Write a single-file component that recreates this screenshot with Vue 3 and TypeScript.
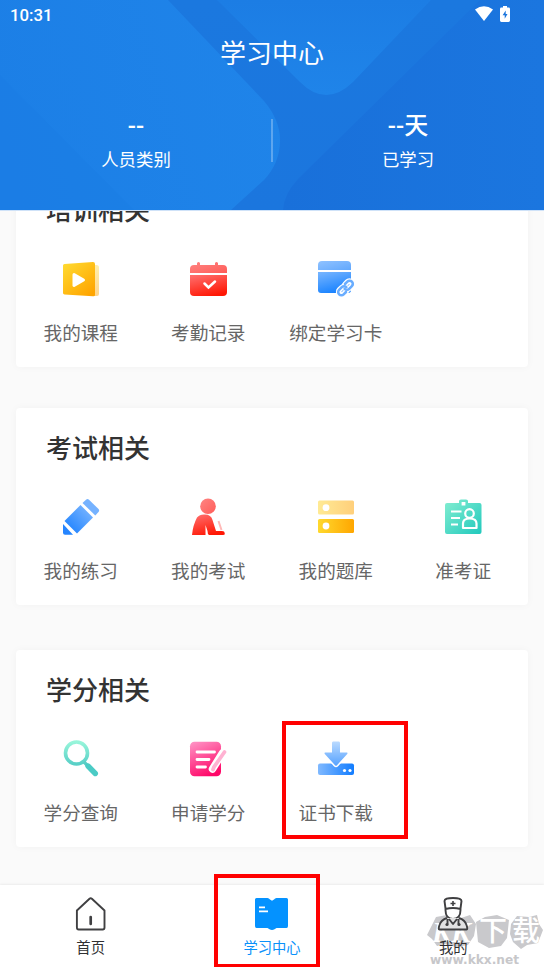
<script setup lang="ts">
interface Entry {
  icon: string
  label: string
  marked?: boolean
}
interface Section {
  title: string
  entries: Entry[]
}

const stats = [
  { value: '--', label: '人员类别' },
  { value: '--天', label: '已学习' },
]

const sections: Section[] = [
  {
    title: '培训相关',
    entries: [
      { icon: 'course', label: '我的课程' },
      { icon: 'calendar', label: '考勤记录' },
      { icon: 'card', label: '绑定学习卡' },
    ],
  },
  {
    title: '考试相关',
    entries: [
      { icon: 'pencil', label: '我的练习' },
      { icon: 'exam', label: '我的考试' },
      { icon: 'bank', label: '我的题库' },
      { icon: 'badge', label: '准考证' },
    ],
  },
  {
    title: '学分相关',
    entries: [
      { icon: 'search', label: '学分查询' },
      { icon: 'apply', label: '申请学分' },
      { icon: 'download', label: '证书下载', marked: true },
    ],
  },
]

const tabs = [
  { key: 'home', label: '首页' },
  { key: 'study', label: '学习中心' },
  { key: 'mine', label: '我的' },
]
</script>

<template>
  <div class="screen">
    <svg class="defs" width="0" height="0" aria-hidden="true">
      <defs>
        <linearGradient id="gYellow" x1="0" y1="0" x2=".8" y2="1"><stop offset="0" stop-color="#ffdc32" /><stop offset="1" stop-color="#ffa500" /></linearGradient>
        <linearGradient id="gYellowH"><stop offset="0" stop-color="#ffd92e" /><stop offset="1" stop-color="#ffa600" /></linearGradient>
        <linearGradient id="gPaleH"><stop offset="0" stop-color="#ffea94" /><stop offset="1" stop-color="#ffcf7b" /></linearGradient>
        <linearGradient id="gPaleV" x1="0" y1="0" x2="0" y2="1"><stop offset="0" stop-color="#ffefac" /><stop offset="1" stop-color="#ffd58c" /></linearGradient>
        <linearGradient id="gRed" x1=".2" y1="0" x2=".6" y2="1"><stop offset="0" stop-color="#ff6b69" /><stop offset="1" stop-color="#ff1704" /></linearGradient>
        <linearGradient id="gRedTop" x1="0" y1="0" x2="1" y2="1"><stop offset="0" stop-color="#ff8583" /><stop offset="1" stop-color="#ff5c58" /></linearGradient>
        <linearGradient id="gBlue" x1=".2" y1="0" x2=".6" y2="1"><stop offset="0" stop-color="#73b3ff" /><stop offset="1" stop-color="#1480ff" /></linearGradient>
        <linearGradient id="gBlueTop" x1="0" y1="0" x2="1" y2="1"><stop offset="0" stop-color="#90c2ff" /><stop offset="1" stop-color="#62a8fd" /></linearGradient>
        <linearGradient id="gPencil" x1="1" y1="0" x2="0" y2="1"><stop offset="0" stop-color="#86bcff" /><stop offset="1" stop-color="#137cff" /></linearGradient>
        <linearGradient id="gTray"><stop offset="0" stop-color="#80b9ff" /><stop offset="1" stop-color="#117cff" /></linearGradient>
        <linearGradient id="gArrow" x1="0" y1="0" x2="0" y2="1"><stop offset="0" stop-color="#badaff" /><stop offset="1" stop-color="#56a2ff" /></linearGradient>
        <linearGradient id="gTeal" x1="0" y1="0" x2="1" y2="1"><stop offset="0" stop-color="#84eed1" /><stop offset="1" stop-color="#21c9bd" /></linearGradient>
        <linearGradient id="gLens" x1="0" y1="0" x2="0" y2="1"><stop offset="0" stop-color="#97f5da" /><stop offset="1" stop-color="#59d0c7" /></linearGradient>
        <linearGradient id="gPink" x1=".2" y1="0" x2=".6" y2="1"><stop offset="0" stop-color="#ff8dc1" /><stop offset="1" stop-color="#ff0768" /></linearGradient>
      </defs>
    </svg>

    <header class="header">
      <svg class="header-art" viewBox="0 0 544 210" aria-hidden="true">
        <defs>
          <linearGradient id="hMid" x1="0" y1="0" x2="0" y2="1"><stop offset="0" stop-color="#1b78df" /><stop offset="1" stop-color="#1b76de" /></linearGradient>
          <linearGradient id="hLeft" x1="0" y1=".6" x2="1" y2=".4"><stop offset="0" stop-color="#1c7fe6" /><stop offset="1" stop-color="#1f84e9" /></linearGradient>
          <linearGradient id="hTop" x1="0" y1="0" x2="0" y2="1"><stop offset="0" stop-color="#1c7de4" /><stop offset="1" stop-color="#1f84e9" /></linearGradient>
          <linearGradient id="hRight"><stop offset="0" stop-color="#1970da" /><stop offset="1" stop-color="#1b76df" /></linearGradient>
        </defs>
        <rect width="544" height="210" fill="url(#hMid)" />
        <path d="M0 0H168L264 101Q280 120 280 140Q280 163 264 180L231 210H0Z" fill="url(#hLeft)" />
        <path d="M0 75L134 210H0Z" fill="#1a7be3" opacity=".35" />
        <path d="M217 0H431L353 82Q326 108 300 82Z" fill="url(#hTop)" />
        <path d="M480 0H544V210H283Q284 194 298 179Z" fill="url(#hRight)" />
      </svg>
      <div class="status">
        <span class="clock">10:31</span>
        <span class="status-icons">
          <svg width="18" height="15" viewBox="0 0 18 15"><path d="M0 3.6Q9-3.3 18 3.6L9 15Z" fill="#fff" /></svg>
          <svg width="10" height="16" viewBox="0 0 10 16"><path d="M3 0H7V1.6H8.6Q10 1.6 10 3V14.6Q10 16 8.6 16H1.4Q0 16 0 14.6V3Q0 1.6 1.4 1.6H3Z" fill="#fff" /><path d="M5.7 4.5L2.6 9.2H4.7V12.7L7.5 8H5.7Z" fill="#1a75dd" /></svg>
        </span>
      </div>
      <h1>学习中心</h1>
      <div class="stats">
        <div v-for="s in stats" :key="s.label" class="stat">
          <strong>{{ s.value }}</strong>
          <span>{{ s.label }}</span>
        </div>
      </div>
    </header>

    <main class="scroll">
      <section v-for="section in sections" :key="section.title" class="panel">
        <h2>{{ section.title }}</h2>
        <div class="grid">
          <div v-for="e in section.entries" :key="e.icon" class="entry">
            <svg class="icon" viewBox="0 0 40 40" aria-hidden="true">
              <template v-if="e.icon === 'course'">
                <path d="M30 5H36Q38 5.5 38 7V34Q38 36 36 36H30Z" fill="url(#gPaleV)" />
                <path d="M3.5 4L32 2Q34 2 34 4V35Q34 36.500 32 36.300L3.500 34.500Q2 34 2 33V5.500Q2 4.200 3.500 4Z" fill="url(#gYellow)" />
                <path d="M13 14.500L22.500 20L13 25.500Z" fill="#fff" stroke="#fff" stroke-width="3" stroke-linejoin="round" />
              </template>
              <template v-else-if="e.icon === 'calendar'">
                <path d="M2 13V9Q2 5 6 5H9V3Q10.500 1 12 3V5H27V3Q28.500 1 30 3V5H35Q39 5 39 9V13Z" fill="url(#gRedTop)" />
                <path d="M2 15H39V32Q39 36 35 36H6Q2 36 2 32Z" fill="url(#gRed)" />
                <path d="M16.500 23.500L20.500 27.500L27 21.500" fill="none" stroke="#fff" stroke-width="2.500" stroke-linecap="round" />
              </template>
              <template v-else-if="e.icon === 'card'">
                <path d="M2 10V5Q2 1 6 1H31Q35 1 35 5V10Z" fill="url(#gBlueTop)" />
                <path d="M2 12H35V30Q35 33 32 33H5Q2 33 2 30Z" fill="url(#gBlue)" />
                <g fill="none" stroke-linecap="round">
                  <g transform="rotate(-45 29.500 28)" stroke="#fff" stroke-width="5.500"><rect x="21" y="25" width="9" height="6" rx="3" /><rect x="29" y="25" width="9" height="6" rx="3" /></g>
                  <g transform="rotate(-45 29.500 28)" stroke="#69adff" stroke-width="2.600"><path d="M27 31.200H23.700A3.200 3.200 0 0 1 23.700 24.800H27.500A3.200 3.200 0 0 1 30.700 28" /><path d="M32 24.800H35.300A3.200 3.200 0 0 1 35.300 31.200H31.500A3.200 3.200 0 0 1 28.300 28" /></g>
                </g>
              </template>
              <template v-else-if="e.icon === 'pencil'">
                <path d="M21.500 6L25 2.700Q26.500 1.400 28 2.700L37.500 12Q38.800 13.500 37.500 15L34.300 18.500Z" fill="#75b2ff" />
                <path d="M19.500 8L32 20.500L16 36.500L3.500 24Z" fill="url(#gPencil)" />
                <path d="M2 27L12 37.800H4Q2 37.800 2 35.800Z" fill="#2585ff" />
              </template>
              <template v-else-if="e.icon === 'exam'">
                <circle cx="20" cy="9.200" r="7.800" fill="url(#gRedTop)" />
                <path d="M4 38Q5 28 9 20.500Q12 17 17 17.500Q23 17.500 24.500 23L28 34H34L36 34.500Q38 38 35 38H21Q19.500 37 19.500 34L17.500 28V38Z" fill="url(#gRed)" />
                <path d="M30.500 24L33.500 33" stroke="#ffb9b7" stroke-width="2" />
              </template>
              <template v-else-if="e.icon === 'bank'">
                <rect x="2" y="3.500" width="36" height="14" rx="1.500" fill="url(#gPaleH)" />
                <rect x="2" y="22" width="36" height="14" rx="1.500" fill="url(#gYellowH)" />
                <circle cx="10" cy="10.700" r="3.400" fill="#fff" /><circle cx="10" cy="29" r="3.400" fill="#fff" />
              </template>
              <template v-else-if="e.icon === 'badge'">
                <path fill-rule="evenodd" d="M16 6V4Q16 2.500 18 2.500H23Q25 2.500 25 4V6H36.500Q38.500 6 38.500 8V35Q38.500 37 36.500 37H4Q2 37 2 35V8Q2 6 4 6ZM18.600 5H22.400V8.500H18.600Z" fill="url(#gTeal)" />
                <g fill="none" stroke="#fff" stroke-width="2.200"><path d="M8 14.500H18.500M8 21H17M8 27.500H15" /><circle cx="26.500" cy="16.500" r="4.300" /><path d="M20 31V26.500Q20 21.500 26.500 21.500Q33.500 21.500 33.500 26.500V31Z" stroke-linejoin="round" /></g>
              </template>
              <template v-else-if="e.icon === 'search'">
                <circle cx="15.500" cy="14" r="11" fill="none" stroke="url(#gLens)" stroke-width="3.600" />
                <path d="M23 23L27 27" stroke="#59cec6" stroke-width="3.300" /><path d="M27 27L34.300 34.500" stroke="#4bcbc5" stroke-width="5.400" stroke-linecap="round" />
              </template>
              <template v-else-if="e.icon === 'apply'">
                <rect x="2" y="2.800" width="31" height="34.500" rx="4.500" fill="url(#gPink)" />
                <path d="M9 13H26.500M9 20.500H21M9 28H17.500" stroke="#fff" stroke-width="2.800" stroke-linecap="round" />
                <path d="M34.500 14L24.500 30" stroke="#fff" stroke-width="7.500" stroke-linecap="round" /><path d="M36.500 13L26 28L25 30.500" fill="none" stroke="#ffb2d2" stroke-width="3.700" stroke-linecap="round" />
              </template>
              <template v-else>
                <path d="M4 24.500H36Q38 24.500 38 26.500V34Q38 36 36 36H4Q2 36 2 34V26.500Q2 24.500 4 24.500Z" fill="url(#gTray)" />
                <path d="M17 2.500H23Q24 2.500 24 4V13.500H31Q32 14 31 15.200L21 26.200Q20 27.300 19 26.200L9 15.200Q8 14 9 13.500H16V4Q16 2.500 17 2.500Z" fill="url(#gArrow)" stroke="#fff" stroke-width="3" paint-order="stroke" />
                <circle cx="28.500" cy="31.500" r="1.600" fill="#fff" /><circle cx="34" cy="31.500" r="1.600" fill="#fff" />
              </template>
            </svg>
            <span>{{ e.label }}</span>
            <i v-if="e.marked" class="marker marker-entry"></i>
          </div>
        </div>
      </section>
    </main>

    <nav class="tabs">
      <div class="watermark" aria-hidden="true">
        <svg viewBox="0 0 116 34"><path d="M4 12L9 2L20 0L34 3L43 0L49 9L47 21L41 30L29 32L18 29L10 31L5 24L0 20ZM49 7L58 2L70 0L82 5L80 23L74 31L62 33L51 27ZM84 9L90 1L102 2L110 0L112 9L116 15L111 28L100 30L94 34L86 27L83 19Z" fill="#c9c9cc" /></svg>
        <span class="wm-kk">KK</span><span class="wm-cn">下载</span>
        <span class="wm-url">www.kkx.net</span>
      </div>
      <div v-for="t in tabs" :key="t.key" class="tab" :class="{ active: t.key === 'study' }">
        <svg class="tab-icon" viewBox="0 0 36 36" aria-hidden="true">
          <template v-if="t.key === 'home'">
            <path d="M3.900 14.500L16.500 2.800Q17.700 1.800 18.900 2.800L31.500 14.500V31.500Q31.500 33.500 29.700 33.500H5.700Q3.900 33.500 3.900 31.500Z" fill="none" stroke="#404042" stroke-width="1.900" stroke-linejoin="round" /><path d="M17.700 21V28" stroke="#404042" stroke-width="2.700" stroke-linecap="round" />
          </template>
          <template v-else-if="t.key === 'study'">
            <path d="M2.500 2H13.500Q15 2 16 3.500L18 4.700L20 3.500Q21 2 22.500 2H32.500Q34 2 34 3.500V30Q34 32 32.500 32H22.500L20.500 33.300Q18 34.500 15.500 33.300L13.500 32H2.500Q1 32 1 30V3.500Q1 2 2.500 2Z" fill="#0492ff" /><path d="M5 11.300H11M5 15.300H14" stroke="#fff" stroke-width="1.700" />
          </template>
          <template v-else>
            <g fill="none" stroke="#404042" stroke-width="1.900" stroke-linejoin="round"><path d="M10.500 12.500L9.500 5Q9.500 2 18 2Q26.500 2 26.500 5L25.500 12.500V14Q25.500 23 18 23Q10.500 23 10.500 14ZM10.500 13Q18 11 25.500 13" fill="#fff" /><path d="M12 22Q6 24 4.500 29Q3 33.500 4.500 33.500H31.500Q33 33.500 31.500 29Q30 24 24 22" fill="#e1e1e2" /><path d="M12.500 23V28M23.500 23V28M14 23L18 28L22 23" /></g><path d="M18 5V10M15.500 7.500H20.500" stroke="#404042" stroke-width="1.600" /><circle cx="12" cy="28.500" r="1.600" fill="#404042" /><circle cx="24" cy="28.500" r="1.600" fill="#404042" />
          </template>
        </svg>
        <span>{{ t.label }}</span>
        <i v-if="t.key === 'study'" class="marker marker-tab"></i>
      </div>
    </nav>
  </div>
</template>

<style>
body { margin: 0; }
</style>

<style scoped>
.screen {
  width: 544px;
  height: 967px;
  display: flex;
  flex-direction: column;
  overflow: hidden;
  background: #fafafa;
  font-family: Roboto, "Noto Sans CJK SC", sans-serif;
}
.defs { position: absolute; }
.header {
  position: relative;
  flex: none;
  height: 210px;
  color: #fff;
  box-shadow: 0 1px 0 #cfe2f8;
  z-index: 1;
}
.header-art { position: absolute; inset: 0; width: 544px; height: 210px; }
.status {
  position: relative;
  display: flex;
  justify-content: space-between;
  height: 30px;
  padding: 0 34px 0 10px;
  box-sizing: border-box;
}
.clock { font-size: 16.8px; line-height: 31px; font-weight: 500; }
.status-icons { display: flex; gap: 7px; padding-top: 6px; }
h1 {
  position: relative;
  margin: 0;
  height: 46px;
  line-height: 48px;
  font-size: 26px;
  font-weight: 400;
  text-align: center;
}
.stats { position: relative; display: flex; padding-top: 33px; }
.stats::after {
  content: "";
  position: absolute;
  left: 271px;
  top: 43px;
  width: 2px;
  height: 43px;
  background: rgba(255, 255, 255, .28);
}
.stat { flex: 1; display: flex; flex-direction: column; align-items: center; }
.stat strong { font-size: 24px; line-height: 34px; height: 34px; font-weight: 500; }
.stat span { font-size: 17.4px; line-height: 34px; }
.scroll {
  flex: 1;
  min-height: 0;
  overflow: hidden;
  display: flex;
  flex-direction: column;
  padding: 0 16px;
}
.panel {
  flex: none;
  height: 197px;
  margin-bottom: 45px;
  background: #fff;
  border-radius: 4px;
  box-shadow: 0 0 8px rgba(0, 0, 0, .035);
}
.panel:first-child { margin-top: -40px; margin-bottom: 41px; }
.panel:first-child .icon { margin: 1px 0 -1px; }
h2 {
  margin: 0;
  padding: 21px 0 0 30px;
  font-size: 26px;
  line-height: 40px;
  font-weight: 500;
  color: #333;
}
.grid { display: grid; grid-template-columns: repeat(4, 127.5px); padding: 28px 1px 0; }
.entry { position: relative; display: flex; flex-direction: column; align-items: center; }
.icon { width: 40px; height: 40px; }
.entry span { margin-top: 21px; font-size: 18.6px; line-height: 28px; color: #666; font-weight: 400; }
.marker { position: absolute; border: 4px solid #f00; box-sizing: border-box; }
.marker-entry { left: 9.5px; top: -18px; width: 126px; height: 118px; }
.tabs {
  position: relative;
  flex: none;
  display: flex;
  height: 82px;
  background: #fff;
  box-shadow: 0 -1px 2px rgba(0, 0, 0, .06);
}
.tab {
  position: relative;
  flex: 1;
  display: flex;
  flex-direction: column;
  align-items: center;
  padding-top: 11px;
  color: #303032;
}
.tab-icon { width: 36px; height: 36px; }
.tab span { margin-top: 5px; font-size: 14.3px; line-height: 22px; }
.active { color: #0a91fa; }
.marker-tab { left: 32.5px; top: -11px; width: 106px; height: 94px; }
.watermark { position: absolute; left: 427px; top: 30px; width: 117px; height: 52px; color: #fff; }
.watermark svg { display: block; width: 116px; height: 34px; }
.watermark span { position: absolute; white-space: nowrap; }
.wm-kk { left: 5px; top: 1px; font: italic 700 29px/32px "Liberation Serif", serif; }
.wm-cn { left: 52px; top: 0; font-size: 28px; line-height: 33px; letter-spacing: 5px; font-weight: 500; }
.wm-url { left: 3px; top: 36px; font: 700 12.2px/18px "DejaVu Sans", sans-serif; color: #c7c7ca; }
</style>
